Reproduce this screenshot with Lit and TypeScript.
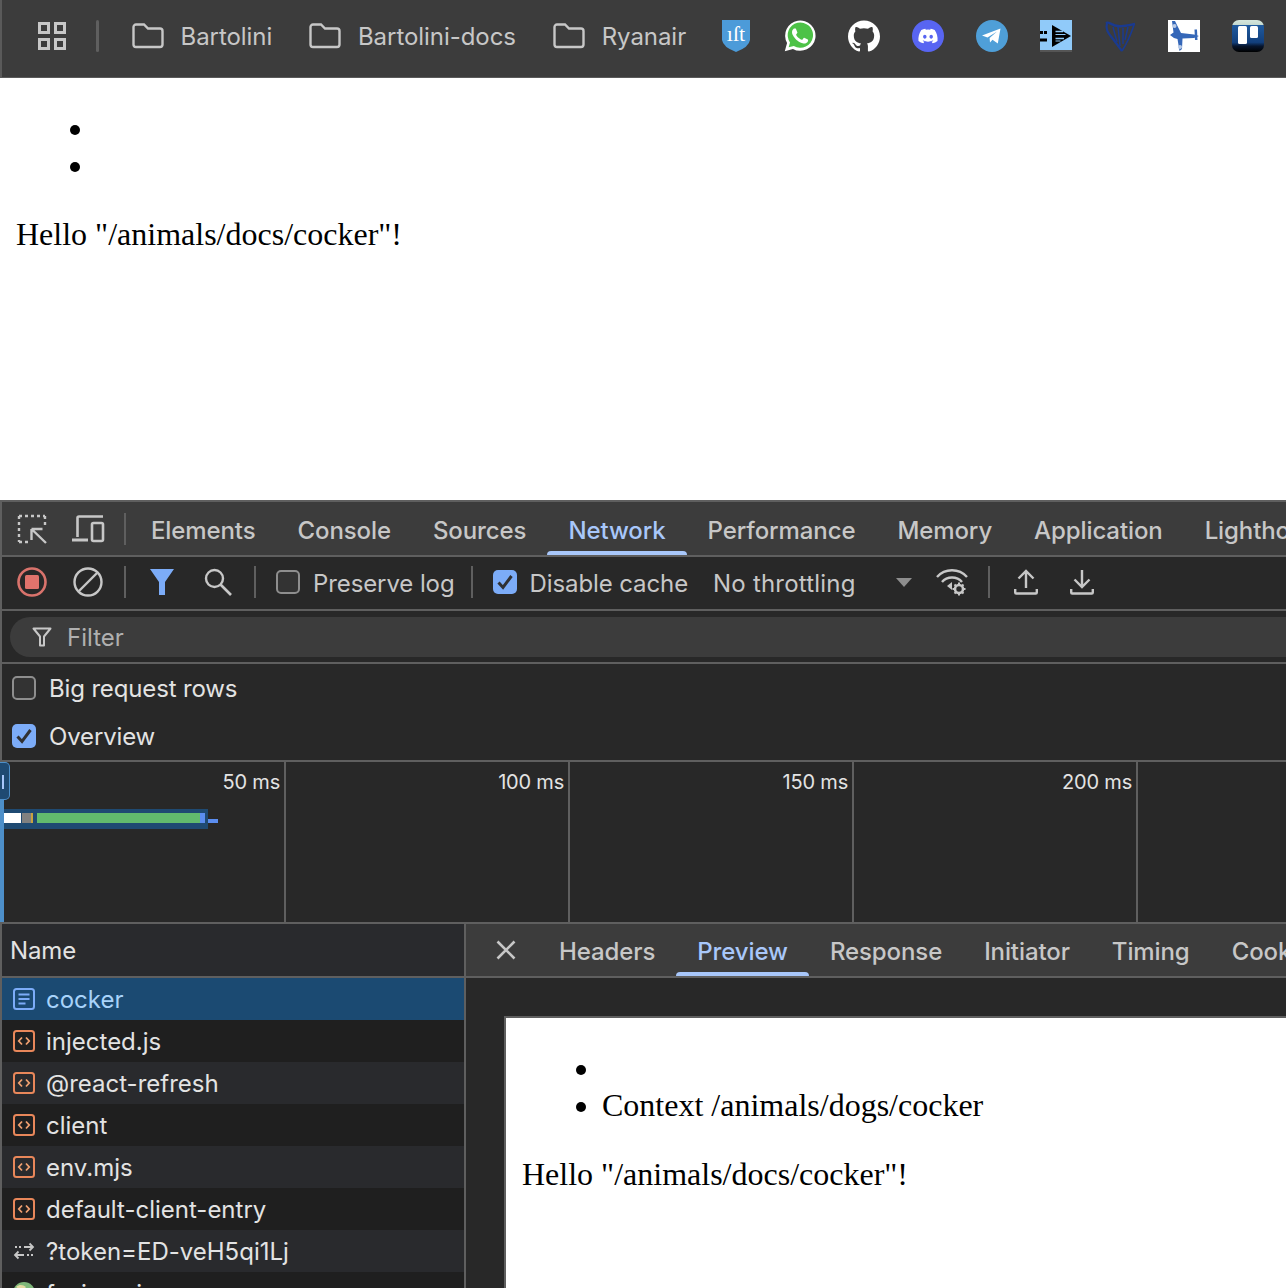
import { LitElement, html, css } from "lit";
import { customElement } from "lit/decorators.js";

const stroke = (w: number, c = "#c7c7c7") => `fill:none;stroke:${c};stroke-width:${w}`;

const folderIcon = html`<svg class="folder" width="32" height="26" viewBox="0 0 32 26"><path d="M1.500 4a2.500 2.500 0 0 1 2.500-2.500h8l4 4h12a2.500 2.500 0 0 1 2.500 2.500v13.500a2.500 2.500 0 0 1-2.500 2.500H4a2.500 2.500 0 0 1-2.500-2.500z" fill="none" stroke="#c7c7c7" stroke-width="2.400"/></svg>`;

const favs = [
  html`<svg width="28" height="32" viewBox="0 0 28 32"><path d="M0 0H28V20Q27 27 14 32Q1 27 0 20Z" fill="#4c9bd9"/><text class="ist" x="14" y="21" text-anchor="middle" fill="#fff">ıſt</text></svg>`,
  html`<svg width="32" height="32" viewBox="0 0 24 24"><path d="M.6 23.400l1.700-6.100A11.400 11.400 0 1 1 6.700 21.700z" fill="#fff"/><path d="M3.500 20.500l1-3.700A9.500 9.500 0 1 1 7.400 19.500z" fill="#4dc247"/><path d="M17.472 14.382c-.297-.149-1.758-.867-2.030-.967-.273-.099-.471-.148-.670.150-.197.297-.767.966-.940 1.164-.173.199-.347.223-.644.075-.297-.150-1.255-.463-2.390-1.475-.883-.788-1.480-1.761-1.653-2.059-.173-.297-.018-.458.130-.606.134-.133.298-.347.446-.520.149-.174.198-.298.298-.497.099-.198.050-.371-.025-.520-.075-.149-.669-1.612-.916-2.207-.242-.579-.487-.500-.669-.510-.173-.008-.371-.010-.570-.010-.198 0-.520.074-.792.372-.272.297-1.040 1.016-1.040 2.479 0 1.462 1.065 2.875 1.213 3.074.149.198 2.096 3.200 5.077 4.487.709.306 1.262.489 1.694.625.712.227 1.360.195 1.871.118.571-.085 1.758-.719 2.006-1.413.248-.694.248-1.289.173-1.413-.074-.124-.272-.198-.570-.347" fill="#fff"/></svg>`,
  html`<svg width="32" height="32" viewBox="0 0 24 24"><path fill="#fff" d="M12 .297c-6.630 0-12 5.373-12 12 0 5.303 3.438 9.800 8.205 11.385.600.113.820-.258.820-.577 0-.285-.010-1.040-.015-2.040-3.338.724-4.042-1.610-4.042-1.610C4.422 18.070 3.633 17.700 3.633 17.700c-1.087-.744.084-.729.084-.729 1.205.084 1.838 1.236 1.838 1.236 1.070 1.835 2.809 1.305 3.495.998.108-.776.417-1.305.760-1.605-2.665-.300-5.466-1.332-5.466-5.930 0-1.310.465-2.380 1.235-3.220-.135-.303-.540-1.523.105-3.176 0 0 1.005-.322 3.300 1.230.960-.267 1.980-.399 3-.405 1.020.006 2.040.138 3 .405 2.280-1.552 3.285-1.230 3.285-1.230.645 1.653.240 2.873.120 3.176.765.840 1.230 1.910 1.230 3.220 0 4.610-2.805 5.625-5.475 5.920.420.360.810 1.096.810 2.220 0 1.606-.015 2.896-.015 3.286 0 .315.210.690.825.570C20.565 22.092 24 17.592 24 12.297c0-6.627-5.373-12-12-12"/></svg>`,
  html`<svg width="32" height="32" viewBox="0 0 32 32"><circle cx="16" cy="16" r="16" fill="#5865f2"/><g transform="translate(6.400 6.400) scale(.8)"><path fill="#fff" d="M20.317 4.370a19.791 19.791 0 0 0-4.885-1.515.074.074 0 0 0-.079.037c-.210.375-.444.864-.608 1.250a18.270 18.270 0 0 0-5.487 0 12.640 12.640 0 0 0-.617-1.250.077.077 0 0 0-.079-.037A19.736 19.736 0 0 0 3.677 4.370a.070.070 0 0 0-.032.027C.533 9.046-.320 13.580.099 18.057a.082.082 0 0 0 .031.057 19.900 19.900 0 0 0 5.993 3.030.078.078 0 0 0 .084-.028 14.090 14.090 0 0 0 1.226-1.994.076.076 0 0 0-.041-.106 13.107 13.107 0 0 1-1.872-.892.077.077 0 0 1-.008-.128 10.200 10.200 0 0 0 .372-.292.074.074 0 0 1 .077-.010c3.928 1.793 8.180 1.793 12.062 0a.074.074 0 0 1 .078.010c.120.098.246.198.373.292a.077.077 0 0 1-.006.127 12.299 12.299 0 0 1-1.873.892.077.077 0 0 0-.041.107c.360.698.772 1.362 1.225 1.993a.076.076 0 0 0 .084.028 19.839 19.839 0 0 0 6.002-3.030.077.077 0 0 0 .032-.054c.500-5.177-.838-9.674-3.549-13.660a.061.061 0 0 0-.031-.030zM8.020 15.330c-1.183 0-2.157-1.085-2.157-2.419 0-1.333.956-2.419 2.157-2.419 1.210 0 2.176 1.096 2.157 2.420 0 1.333-.956 2.418-2.157 2.418zm7.975 0c-1.183 0-2.157-1.085-2.157-2.419 0-1.333.955-2.419 2.157-2.419 1.210 0 2.176 1.096 2.157 2.420 0 1.333-.946 2.418-2.157 2.418z"/></g></svg>`,
  html`<svg width="32" height="32" viewBox="0 0 32 32"><circle cx="16" cy="16" r="16" fill="#4f9fd8"/><path d="M6 15.500L24.500 8.500 21.800 23.500 16.500 19.800 14 22.500 13.600 18 21 11.500 11.500 17.500Z" fill="#fff"/></svg>`,
  html`<svg width="32" height="32" viewBox="0 0 32 32"><rect width="32" height="32" fill="#555"/><rect width="32" height="30" fill="#90caf9"/><path d="M12 5L31 16 12 27Z" fill="#000"/><path d="M15.500 11.500H23M15.500 18.500H24" stroke="#90caf9" stroke-width="1.600"/><path d="M15.500 14.500H25.500M15.500 21L20.500 21" stroke="#90caf9" stroke-width="1"/><rect x="0" y="11" width="3" height="3" fill="#000"/><rect x="0" y="18.500" width="7" height="3" fill="#000"/><rect x="4" y="11" width="3" height="3" fill="#000"/></svg>`,
  html`<svg width="32" height="32" viewBox="0 0 32 32" fill="none" stroke="#1a3a8f"><path d="M2 3C5 1 8 6 14 6C20 7 26 5 31 4" stroke-width="2.400"/><path d="M3 3C1 10 5 14 9 19L18 31" stroke-width="2.200"/><path d="M30 5C27 14 24 22 18 31" stroke-width="1.600"/><path d="M9 7L13 22M14 7L16 26M19 8L19 24M24 7L21 20" stroke-width="1.500"/></svg>`,
  html`<svg width="32" height="32" viewBox="0 0 32 32"><rect width="32" height="32" fill="#fff"/><path d="M4 1L7 1 13 13 26 14.500 31 16 26 18 14.500 18.500 14 29 11.500 31 9.500 19 6 18 2 15 5.500 12.500Z" fill="#3567b8"/><path d="M26.500 9.500L29 9.500 29.500 20 27 20Z" fill="#3567b8"/><circle cx="6.500" cy="6" r="2" fill="#b9cbe8"/><circle cx="12" cy="27" r="2" fill="#b9cbe8"/></svg>`,
  html`<svg width="32" height="32" viewBox="0 0 32 32"><defs><linearGradient id="tr" x1="0" y1="0" x2="0" y2="1"><stop offset="0" stop-color="#d5e6dc"/><stop offset=".14" stop-color="#c8dcd2"/><stop offset=".17" stop-color="#1f5a9e"/><stop offset=".7" stop-color="#123f7c"/><stop offset=".82" stop-color="#06142c"/><stop offset="1" stop-color="#000"/></linearGradient></defs><rect width="32" height="32" rx="7" fill="url(#tr)"/><rect x="6" y="6" width="9" height="18" rx="1.500" fill="#fff"/><rect x="18" y="6" width="8" height="12" rx="1.500" fill="#fff"/></svg>`,
];

const inspectIcon = html`<svg width="30" height="30" viewBox="0 0 30 30"><path d="M2 2h26" style="${stroke(2.4)};stroke-dasharray:3 3"/><path d="M2 2v26M2 28h10M28 2v10" style="${stroke(2.4)};stroke-dasharray:3 3"/><path d="M14.500 15h11M14.500 15v11M15 15.500L29 29" style="${stroke(2.4)}"/></svg>`;
const deviceIcon = html`<svg width="34" height="28" viewBox="0 0 34 28"><path d="M6.500 22V3a1.500 1.500 0 0 1 1.500-1.500h24" style="${stroke(2.6)}"/><path d="M1 25h16" style="${stroke(3)}"/><rect x="21" y="8" width="11" height="18" rx="1.500" style="${stroke(2.6)}"/></svg>`;
const recIcon = html`<svg width="30" height="30" viewBox="0 0 30 30"><circle cx="15" cy="15" r="13.500" style="${stroke(2.6, "#d9736c")}"/><rect x="8" y="8" width="14" height="14" rx="1.500" fill="#e0736c"/></svg>`;
const clearIcon = html`<svg width="30" height="30" viewBox="0 0 30 30"><circle cx="15" cy="15" r="13.500" style="${stroke(2.4)}"/><path d="M6 24L24 6" style="${stroke(2.4)}"/></svg>`;
const funnelFill = html`<svg width="24" height="26" viewBox="0 0 24 26"><path d="M0 0H24L15 13V26H9V13Z" fill="#7cacf8"/></svg>`;
const searchIcon = html`<svg width="28" height="28" viewBox="0 0 28 28"><circle cx="10.500" cy="10.500" r="8.500" style="${stroke(2.4)}"/><path d="M16.500 16.500L27 27" style="${stroke(2.6)}"/></svg>`;
const wifiIcon = html`<svg width="34" height="28" viewBox="0 0 34 28"><path d="M2 9C10 0 24 0 32 9" style="${stroke(2.4)}"/><path d="M7 14C12 8 22 8 27 14" style="${stroke(2.4)}"/><path d="M12 19l5-4v8z" fill="#c7c7c7" transform="translate(0 -1)"/><circle cx="24" cy="21" r="4" style="${stroke(2.6)}"/><path d="M24 14.500v3M24 24.500v3M17.500 21h3M27.500 21h3M19.500 16.500l2 2M26.500 23.500l2 2M28.500 16.500l-2 2M21.500 23.500l-2 2" style="${stroke(2)}"/></svg>`;
const uploadIcon = html`<svg width="24" height="26" viewBox="0 0 24 26"><path d="M12 19V2M4.500 9.500L12 2l7.500 7.500" style="${stroke(2.4)}"/><path d="M1.200 20v3.500a1 1 0 0 0 1 1h19.600a1 1 0 0 0 1-1V20" style="${stroke(2.4)}"/></svg>`;
const downloadIcon = html`<svg width="24" height="26" viewBox="0 0 24 26"><path d="M12 1V18M4.500 10.500L12 18l7.500-7.500" style="${stroke(2.4)}"/><path d="M1.200 20v3.500a1 1 0 0 0 1 1h19.600a1 1 0 0 0 1-1V20" style="${stroke(2.4)}"/></svg>`;
const funnelLine = html`<svg width="20" height="20" viewBox="0 0 20 20"><path d="M1.500 1.500H18.500L12 9.500V18.500H8V9.500Z" style="${stroke(2)};stroke-linejoin:round"/></svg>`;
const closeIcon = html`<svg width="20" height="20" viewBox="0 0 20 20"><path d="M1.500 1.500L18.500 18.500M18.500 1.500L1.500 18.500" style="${stroke(2.6)}"/></svg>`;
const checkMark = html`<svg width="24" height="24" viewBox="0 0 24 24"><path d="M5.500 12.500L10 17.500 18.500 6" style="fill:none;stroke:#303134;stroke-width:3"/></svg>`;

const docIcon = html`<svg width="22" height="22" viewBox="0 0 22 22"><rect x="1" y="1" width="20" height="20" rx="2.500" style="${stroke(2, "#7cacf8")}"/><path d="M5.500 6.500h11M5.500 11h11M5.500 15.500h7" style="${stroke(1.8, "#7cacf8")}"/></svg>`;
const scriptIcon = html`<svg width="22" height="22" viewBox="0 0 22 22"><rect x="1" y="1" width="20" height="20" rx="2.500" style="${stroke(2, "#e8875a")}"/><path d="M9 7.500L5.800 11 9 14.500M13 7.500L16.200 11 13 14.500" style="${stroke(1.8, "#f0a070")}"/></svg>`;
const fetchIcon = html`<svg width="22" height="18" viewBox="0 0 22 18"><path d="M11 5h9M16.500 1.500L20 5l-3.500 3.500M2 5h2M6 5h2" style="${stroke(1.8)}"/><path d="M11 13H2M5.500 9.500L2 13l3.500 3.500M20 13h-2M16 13h-2" style="${stroke(1.8)}"/></svg>`;
const globeIcon = html`<svg width="22" height="22" viewBox="0 0 22 22"><circle cx="11" cy="11" r="11" fill="#7fb87a"/><path d="M3 5C7 2 10 3 13 5 11 8 7 8 3 5Z" fill="#e3d9a0"/></svg>`;

const rows = [
  { n: "injected.js", i: scriptIcon },
  { n: "@react-refresh", i: scriptIcon },
  { n: "client", i: scriptIcon },
  { n: "env.mjs", i: scriptIcon },
  { n: "default-client-entry", i: scriptIcon },
  { n: "?token=ED-veH5qi1Lj", i: fetchIcon },
  { n: "favicon.ico", i: globeIcon },
];

@customElement("app-root")
export class AppRoot extends LitElement {
  static styles = css`
    :host {
      display: block;
      width: 1286px;
      height: 1288px;
      overflow: hidden;
      background: #fff;
      font-family: Inter, "Liberation Sans", sans-serif;
      font-size: 24px;
      color: #c7c7c7;
    }
    svg { flex: none; display: block; }
    .bookmarks {
      height: 72px;
      padding: 0 0 5px 36px;
      background: #3c3c3c;
      border-left: 2px solid #5a5a5a;
      border-bottom: 1px solid #5a5a5a;
      display: flex;
      align-items: center;
      white-space: nowrap;
    }
    .grid4 { flex: none; display: grid; grid-template-columns: 12px 12px; gap: 4px; margin-right: 30px; }
    .grid4 i { width: 6px; height: 6px; border: 3px solid #c7c7c7; }
    .bm-sep { flex: none; width: 3px; height: 32px; background: #5f5f5f; border-radius: 2px; margin-right: 33px; }
    .bm { flex: none; display: flex; align-items: center; gap: 16.500px; margin-right: 37.200px; letter-spacing: -0.05px; }
    .favs { flex: none; display: flex; align-items: center; margin-left: -19px; }
    .fav { flex: none; width: 64px; display: flex; justify-content: center; }
    .ist { font: 22px "Liberation Serif", serif; }
    .page {
      height: 422px;
      background: #fff;
      overflow: hidden;
    }
    .doc {
      margin: 16px;
      font: 32px "Liberation Serif", serif;
      color: #000;
    }
    .doc ul { margin: 32px 0; padding-left: 80px; }
    .doc p { margin: 32px 0; }
    .devtools {
      height: 788px;
      border-left: 2px solid #5f5f5f;
      background: #282828;
      display: flex;
      flex-direction: column;
    }
    .tabbar {
      flex: none;
      height: 53px;
      background: #3c3c3c;
      border-top: 2px solid #5f5f5f;
      border-bottom: 2px solid #5f5f5f;
      display: flex;
      align-items: stretch;
      white-space: nowrap;
      overflow: hidden;
    }
    .ibox { flex: none; width: 56px; display: flex; align-items: center; justify-content: center; }
    .first { margin-left: 2px; }
    .sep { flex: none; align-self: center; width: 2px; height: 32px; background: #5f5f5f; margin: 0 8px; }
    .tab { position: relative; padding: 3px 21px 0; display: flex; align-items: center; flex: none; font-weight: 500; letter-spacing: -0.1px; }
    .rtabs .tab { padding-top: 2px; }
    .tab.on { color: #a8c7fa; }
    .tab.on::after {
      content: "";
      position: absolute;
      left: 0;
      right: 0;
      bottom: 0;
      height: 4px;
      background: #a8c7fa;
      border-radius: 6px 6px 0 0;
    }
    .tabs-start { margin-left: -4px; display: flex; }
    .toolbar {
      flex: none;
      height: 50px;
      padding-bottom: 2px;
      border-bottom: 2px solid #5f5f5f;
      display: flex;
      align-items: center;
      white-space: nowrap;
      overflow: hidden;
    }
    .cb {
      flex: none;
      box-sizing: border-box;
      width: 24px;
      height: 24px;
      border-radius: 5px;
      border: 2px solid #8e8e8e;
      background: #333;
      display: flex;
    }
    .cb.on { background: #7cacf8; border: none; }
    .m20 { margin-left: 20px; }
    .m12 { margin-left: 12px; }
    .lbl { margin-left: 13px; padding-top: 2px; letter-spacing: -0.1px; }
    .optrow .lbl { padding-top: 1px; letter-spacing: -0.15px; }
    .sep.after { margin: 0 0 0 16px; }
    .throttle { margin-left: 25px; padding-top: 2px; letter-spacing: 0.2px; }
    .arrow { flex: none; width: 0; height: 0; border: 8px solid transparent; border-top: 9px solid #8e8e8e; border-bottom: 0; margin-left: 40px; margin-right: 12px; }
    .filterrow {
      flex: none;
      height: 51px;
      border-bottom: 2px solid #5f5f5f;
      padding-left: 8px;
      display: flex;
      align-items: center;
    }
    .pill {
      flex: 1;
      height: 40px;
      background: #3c3c3c;
      border-radius: 20px 0 0 20px;
      display: flex;
      align-items: center;
      gap: 15px;
      padding-left: 22px;
      color: #b0b0b0;
    }
    .pill span { padding-top: 2px; }
    .optrow {
      flex: none;
      height: 48px;
      display: flex;
      align-items: center;
      padding-left: 10px;
      color: #e3e3e3;
    }
    .opts { flex: none; border-bottom: 2px solid #5f5f5f; }
    .overview {
      flex: none;
      position: relative;
      height: 160px;
      border-bottom: 2px solid #5f5f5f;
      display: flex;
    }
    .cell {
      flex: none;
      box-sizing: border-box;
      width: 284px;
      border-right: 2px solid #5f5f5f;
      text-align: right;
      padding: 8px 4px 0 0;
      font-size: 20px;
      line-height: 24px;
      color: #e3e3e3;
      letter-spacing: -0.2px;
    }
    .handle { position: absolute; left: -2px; top: 0; width: 4px; height: 160px; background: #4d8fc9; }
    .grip { position: absolute; left: -2px; top: 0; width: 10px; height: 38px; background: #1f4a72; border: 1px solid #4d8fc9; border-left: none; border-radius: 0 5px 5px 0; box-sizing: border-box; }
    .grip::after { content: ""; position: absolute; left: 2px; top: 12px; width: 2px; height: 14px; background: #a8c7fa; }
    .bar { position: absolute; left: 2px; top: 47px; width: 204px; height: 20px; background: #1f4a72; display: flex; box-sizing: border-box; padding: 4px 0; }
    .bar i { display: block; height: 10px; flex: none; }
    .tail { position: absolute; left: 206px; top: 57px; width: 10px; height: 4px; background: #5b8def; }
    .split { flex: 1; display: flex; min-height: 0; }
    .left { flex: none; width: 462px; border-right: 2px solid #5f5f5f; }
    .namehdr {
      height: 51px;
      padding: 1px 0 0 8px;
      background: #292a2d;
      border-bottom: 2px solid #5f5f5f;
      display: flex;
      align-items: center;
      letter-spacing: -0.1px;
      color: #e3e3e3;
    }
    .row {
      height: 41px;
      padding: 1px 0 0 11px;
      display: flex;
      align-items: center;
      color: #e3e3e3;
      background: #1f1f1f;
      white-space: nowrap;
    }
    .row.alt { background: #292a2d; }
    .row.sel { background: #1b4a72; color: #a8d3fa; }
    .ric { flex: none; width: 22px; display: flex; align-items: center; justify-content: center; margin: -1px 11px 0 0; }
    .right { flex: 1; min-width: 0; display: flex; flex-direction: column; }
    .rtabs {
      flex: none;
      height: 52px;
      background: #3c3c3c;
      border-bottom: 2px solid #5f5f5f;
      display: flex;
      align-items: stretch;
      white-space: nowrap;
      overflow: hidden;
    }
    .x { width: 72px; flex: none; display: flex; align-items: center; padding-left: 30px; box-sizing: border-box; }
    .rbody { flex: 1; padding: 38px 0 0 38px; min-height: 0; }
    .white {
      height: 400px;
      background: #fff;
      border-top: 2px solid #5f5f5f;
      border-left: 2px solid #5f5f5f;
      overflow: hidden;
    }
  `;

  render() {
    const marks = [17, 1, 9, 2, 3, 1, 163, 5];
    const cols = ["#fff", "transparent", "#808080", "#c9a23f", "#1f4a72", "#1f4a72", "#62bb6d", "#5b8def"];
    return html`
      <div class="bookmarks">
        <div class="grid4"><i></i><i></i><i></i><i></i></div>
        <div class="bm-sep"></div>
        ${["Bartolini", "Bartolini-docs", "Ryanair"].map(
          (n) => html`<div class="bm">${folderIcon}<span>${n}</span></div>`
        )}
        <div class="favs">${favs.map((f) => html`<div class="fav">${f}</div>`)}</div>
      </div>
      <div class="page">
        <div class="doc">
          <ul><li></li><li></li></ul>
          <p>Hello "/animals/docs/cocker"!</p>
        </div>
      </div>
      <div class="devtools">
        <div class="tabbar">
          <div class="ibox first">${inspectIcon}</div>
          <div class="ibox">${deviceIcon}</div>
          <div class="sep"></div>
          <div class="tabs-start">
            ${["Elements", "Console", "Sources", "Network", "Performance", "Memory", "Application", "Lighthouse"].map(
              (t) => html`<div class="tab ${t === "Network" ? "on" : ""}">${t}</div>`
            )}
          </div>
        </div>
        <div class="toolbar">
          <div class="ibox first">${recIcon}</div>
          <div class="ibox">${clearIcon}</div>
          <div class="sep"></div>
          <div class="ibox">${funnelFill}</div>
          <div class="ibox">${searchIcon}</div>
          <div class="sep"></div>
          <div class="cb m12"></div>
          <span class="lbl">Preserve log</span>
          <div class="sep after"></div>
          <div class="cb on m20">${checkMark}</div>
          <span class="lbl">Disable cache</span>
          <span class="throttle">No throttling</span>
          <div class="arrow"></div>
          <div class="ibox">${wifiIcon}</div>
          <div class="sep"></div>
          <div class="ibox">${uploadIcon}</div>
          <div class="ibox">${downloadIcon}</div>
        </div>
        <div class="filterrow">
          <div class="pill">${funnelLine}<span>Filter</span></div>
        </div>
        <div class="opts">
          <div class="optrow"><div class="cb"></div><span class="lbl">Big request rows</span></div>
          <div class="optrow"><div class="cb on">${checkMark}</div><span class="lbl">Overview</span></div>
        </div>
        <div class="overview">
          ${["50 ms", "100 ms", "150 ms", "200 ms"].map((t) => html`<div class="cell">${t}</div>`)}
          <div class="handle"></div>
          <div class="grip"></div>
          <div class="bar">
            ${marks.map((w, i) => html`<i style="width:${w}px;background:${cols[i]}"></i>`)}
          </div>
          <div class="tail"></div>
        </div>
        <div class="split">
          <div class="left">
            <div class="namehdr">Name</div>
            <div class="row sel"><span class="ric">${docIcon}</span>cocker</div>
            ${rows.map(
              (r, i) => html`<div class="row ${i % 2 ? "alt" : ""}"><span class="ric">${r.i}</span>${r.n}</div>`
            )}
          </div>
          <div class="right">
            <div class="rtabs">
              <div class="x">${closeIcon}</div>
              ${["Headers", "Preview", "Response", "Initiator", "Timing", "Cookies"].map(
                (t) => html`<div class="tab ${t === "Preview" ? "on" : ""}">${t}</div>`
              )}
            </div>
            <div class="rbody">
              <div class="white">
                <div class="doc">
                  <ul><li></li><li>Context /animals/dogs/cocker</li></ul>
                  <p>Hello "/animals/docs/cocker"!</p>
                </div>
              </div>
            </div>
          </div>
        </div>
      </div>
    `;
  }
}
